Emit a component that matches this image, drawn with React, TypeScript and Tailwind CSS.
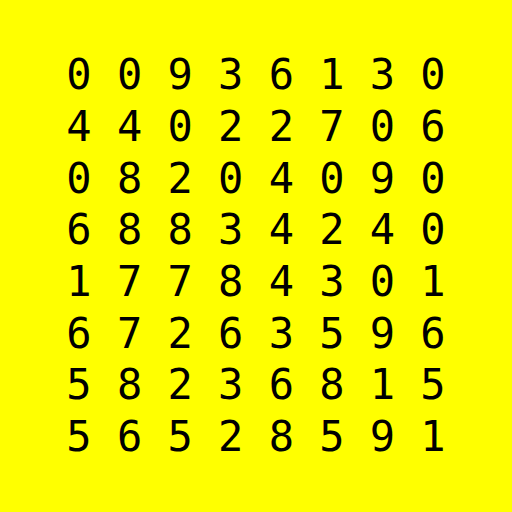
import React from 'react';

const rows = [
  '00936130',
  '44022706',
  '08204090',
  '68834240',
  '17784301',
  '67263596',
  '58236815',
  '56528591',
];

export default function App() {
  return (
    <div className="flex h-[512px] w-[512px] items-center justify-center bg-[#ffff00]">
      <div className="font-['DejaVu_Sans_Mono',monospace] text-[42px] leading-[51.7px] text-black whitespace-pre">
        {rows.map((r, i) => (
          <div key={i}>{r.split('').join(' ')}</div>
        ))}
      </div>
    </div>
  );
}
